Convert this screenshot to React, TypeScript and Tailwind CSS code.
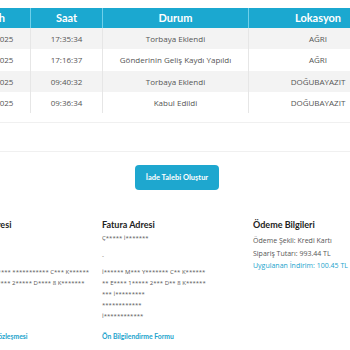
const rows = [
  { tarih: '18.03.2025', saat: '17:35:34', durum: 'Torbaya Eklendi', lokasyon: 'AĞRI', gray: true },
  { tarih: '18.03.2025', saat: '17:16:37', durum: 'Gönderinin Geliş Kaydı Yapıldı', lokasyon: 'AĞRI', gray: false },
  { tarih: '17.03.2025', saat: '09:40:32', durum: 'Torbaya Eklendi', lokasyon: 'DOĞUBAYAZIT', gray: true },
  { tarih: '17.03.2025', saat: '09:36:34', durum: 'Kabul Edildi', lokasyon: 'DOĞUBAYAZIT', gray: false },
]

const teslimat = [
  'İ***** M*** Y****** *********** C*** K******',
  '** E****** 1******* 2***** D**** 8 K*******',
  '*** İ*********',
  '************',
  'İ************',
]

const fatura = [
  'İ****** M*** Y******* C** K******',
  '** E**** 1***** 2*** D** 8 K******',
  '*** İ*********',
  '************',
  'İ************',
]

function AddressCol({ title, lines, link }: { title: string; lines: string[]; link: string }) {
  return (
    <div className="flex flex-col">
      <div className="font-['Lato',sans-serif] text-[9px] font-bold text-[#222] leading-[12px]">{title}</div>
      <div className="mt-[2px] text-[6px] text-[#555] leading-[11px] whitespace-nowrap">Ç***** İ*******</div>
      <div className="mt-[7px] text-[6px] text-[#555] leading-[11px]">-</div>
      <div className="mt-[5px] flex flex-col text-[6px] text-[#555] leading-[11px] whitespace-nowrap">
        {lines.map((l, i) => (
          <div key={i}>{l}</div>
        ))}
      </div>
      <div className="mt-[9px] font-['Lato',sans-serif] text-[6.8px] font-bold text-[#1aa3cc] leading-[11px] whitespace-nowrap">
        {link}
      </div>
    </div>
  )
}

export default function App() {
  return (
    <div className="w-[350px] h-[350px] overflow-hidden bg-white font-['Open_Sans',sans-serif]">
      <div className="ml-[-44px] w-[442px] pt-[8px]">
        {/* Hareketler tablosu */}
        <div className="w-[431px] text-[8px] text-[#555]">
          <div className="grid grid-cols-[75px_72px_146px_138px] h-[20px] bg-[#1ba8d0] text-white text-[11px] font-bold font-['Lato',sans-serif]">
            {['Tarih', 'Saat', 'Durum', 'Lokasyon'].map((h, i) => (
              <div
                key={h}
                className={`flex items-center justify-center ${i < 3 ? 'border-r border-[#6fd0ea]' : ''}`}
              >
                {h}
              </div>
            ))}
          </div>
          {rows.map((r, idx) => (
            <div
              key={idx}
              className={`grid grid-cols-[75px_72px_146px_138px] ${idx === 1 ? 'h-[22px]' : 'h-[21px]'} ${r.gray ? 'bg-[#f3f3f3]' : 'bg-white'}`}
            >
              <div className="flex items-center justify-center border-r border-[#e6e6e6]">{r.tarih}</div>
              <div className="flex items-center justify-center border-r border-[#e6e6e6]">{r.saat}</div>
              <div className="flex items-center justify-center border-r border-[#e6e6e6]">{r.durum}</div>
              <div className="flex items-center justify-center">{r.lokasyon}</div>
            </div>
          ))}
        </div>

        <div className="mt-[9px] h-[30px] border-y border-[#f0f0f0]" />

        <div className="flex justify-center pt-[13px]">
          <button className="w-[84px] h-[25px] rounded-[4px] bg-[#1ea7cf] text-white text-[7.5px] font-bold font-['Lato',sans-serif]">
            İade Talebi Oluştur
          </button>
        </div>

        {/* Adres ve ödeme bilgileri */}
        <div className="mt-[29px] ml-[-5px] grid grid-cols-[151px_151px_151px]">
          <AddressCol title="Teslimat Adresi" lines={teslimat} link="Mesafeli Satış Sözleşmesi" />
          <AddressCol title="Fatura Adresi" lines={fatura} link="Ön Bilgilendirme Formu" />
          <div className="flex flex-col text-[7px] text-[#555] leading-[12.5px] whitespace-nowrap">
            <div className="font-['Lato',sans-serif] text-[9px] font-bold text-[#222] leading-[12px]">Ödeme Bilgileri</div>
            <div className="mt-[4px]">Ödeme Şekli: Kredi Kartı</div>
            <div>Sipariş Tutarı: 993.44 TL</div>
            <div className="text-[#1aa3cc]">Uygulanan İndirim: 100.45 TL</div>
          </div>
        </div>
      </div>
    </div>
  )
}
